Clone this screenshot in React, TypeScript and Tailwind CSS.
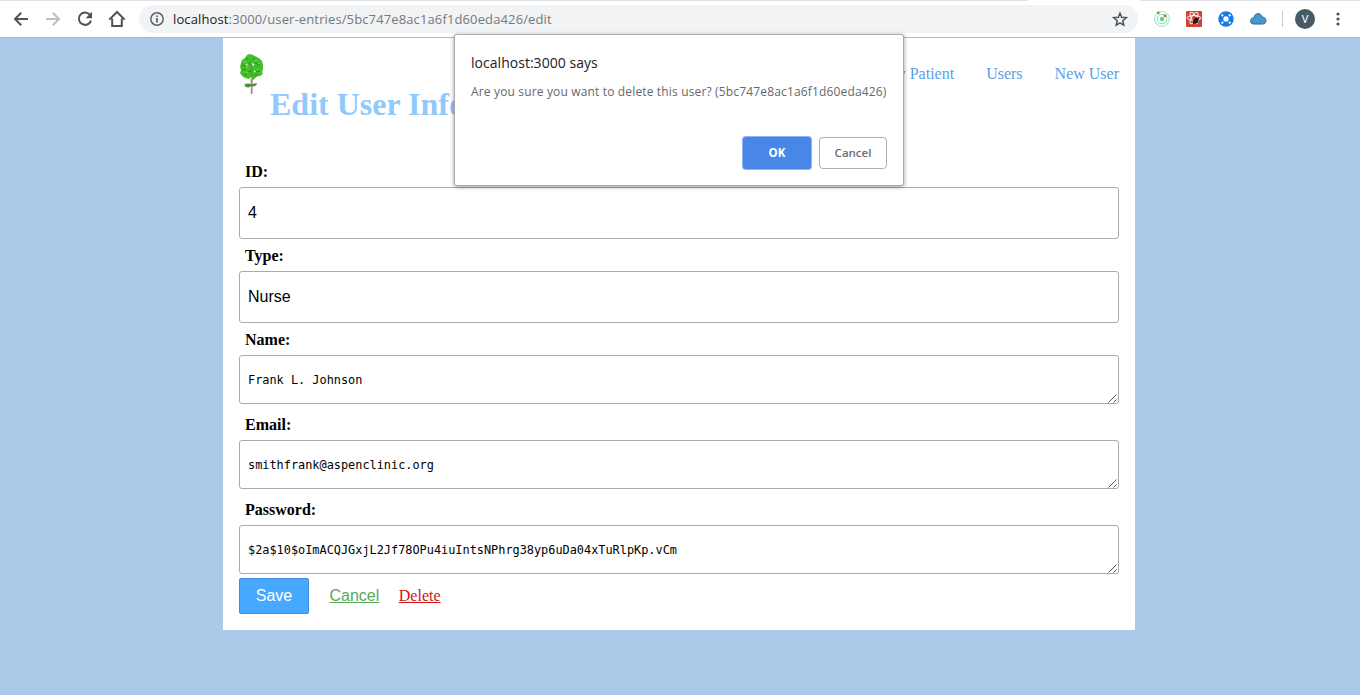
import type { ReactNode } from 'react';

const serif = "font-['Liberation_Serif','Times_New_Roman',serif]";
const sans = "font-['Liberation_Sans',Arial,sans-serif]";
const ui = "font-['Open_Sans','Segoe_UI',sans-serif]";

function BrowserBar() {
  return (
    <div className="flex h-[38px] w-full flex-col border-b border-[#b4b6b8] bg-white">
      <div className="flex h-px bg-[#dee1e6]">
        <div className="ml-[1028px] w-[112px] bg-white" />
      </div>
      <div className="flex h-9 items-center">
        <svg className="ml-3 shrink-0" width="18" height="18" viewBox="0 0 18 18" fill="none" stroke="#4f5357" strokeWidth="2">
          <path d="M16 9H3.2M9.2 2.8 3 9l6.2 6.2" />
        </svg>
        <svg className="ml-[14px] shrink-0" width="18" height="18" viewBox="0 0 18 18" fill="none" stroke="#bdbfc1" strokeWidth="2">
          <path d="M2 9h12.8M8.8 2.8 15 9l-6.2 6.2" />
        </svg>
        <svg className="ml-[14px] shrink-0" width="18" height="18" viewBox="0 0 18 18">
          <path d="M14.2 5.1A6.2 6.2 0 1 0 15 10.6" fill="none" stroke="#4f5357" strokeWidth="2" />
          <path d="M16 1.8v6.4H9.6z" fill="#4f5357" />
        </svg>
        <svg className="ml-[14px] shrink-0" width="18" height="18" viewBox="0 0 18 18" fill="none" stroke="#4f5357" strokeWidth="2">
          <path d="M1.3 9.6 9 2l7.7 7.6M4.2 8.4V16h9.6V8.4" />
        </svg>
        <div className="ml-[13px] flex h-[28px] w-[999px] shrink-0 items-center rounded-full bg-[#f1f3f4]">
          <svg className="ml-[11px] shrink-0" width="14" height="14" viewBox="0 0 14 14">
            <circle cx="7" cy="7" r="6.2" fill="none" stroke="#5f6368" strokeWidth="1.5" />
            <path d="M6.2 6h1.6v4.5H6.2zM6.2 3.4h1.6v1.5H6.2z" fill="#4f5357" />
          </svg>
          <span className={`ml-[9px] whitespace-nowrap text-[13px] leading-5 tracking-[0.125px] text-[#75797d] ${ui}`}>
            <span className="text-[#202124]">localhost</span>:3000/user-entries/5bc747e8ac1a6f1d60eda426/edit
          </span>
          <svg className="ml-auto mr-[10px] shrink-0" width="16" height="16" viewBox="0 0 16 16" fill="none" stroke="#4f5357" strokeWidth="1.5">
            <path d="m8 2.200 1.700 4.100 4.600.4-3.500 3 1 4.500L8 11.800l-3.800 2.400 1-4.500-3.500-3 4.600-.4z" />
          </svg>
        </div>
        <svg className="ml-[16px] shrink-0" width="16" height="16" viewBox="0 0 16 16" fill="none">
          <circle cx="8" cy="8" r="7.4" stroke="#8ee8b8" strokeWidth="1" />
          <circle cx="8" cy="8" r="4.8" stroke="#72e5a8" strokeWidth="1" />
          <circle cx="8" cy="8" r="2.2" fill="#45df90" />
          <circle cx="4.2" cy="1.8" r="1.4" fill="#d3692e" />
          <circle cx="11" cy="4.8" r="1.5" fill="#dc6130" />
        </svg>
        <svg className="ml-4 shrink-0" width="16" height="16" viewBox="0 0 16 16" fill="none">
          <rect width="16" height="16" rx="1" fill="#cf4338" />
          <g stroke="#fce9e6" strokeWidth="1.1">
            <ellipse cx="8" cy="7" rx="6.4" ry="2.5" />
            <ellipse cx="8" cy="7" rx="6.4" ry="2.5" transform="rotate(60 8 7)" />
            <ellipse cx="8" cy="7" rx="6.4" ry="2.5" transform="rotate(120 8 7)" />
          </g>
          <ellipse cx="9.800" cy="9.600" rx="2.300" ry="3.600" fill="#2c1512" transform="rotate(35 9.8 9.6)" />
          <path d="m6.500 9 6 3M7 13l5-6" stroke="#2c1512" />
        </svg>
        <svg className="ml-4 shrink-0" width="16" height="16" viewBox="0 0 16 16">
          <circle cx="8" cy="8" r="7.7" fill="#147bea" />
          <circle cx="8" cy="8" r="2.7" fill="#fff" />
          <path d="m3.600 3.600 1.400 1.400m7.400-1.400L11 5M3.600 12.400 5 11m7.400 1.400L11 11" stroke="#fff" strokeWidth="2" />
        </svg>
        <svg className="ml-[15px] shrink-0" width="18" height="16" viewBox="0 0 18 16">
          <path d="M4.2 13.1a3.2 3.2 0 0 1-.5-6.2c.6-.2 1-.2 1.4-.1C5.200 4 7 2.600 9.100 2.600c2 0 3.600 1.300 4 3.500 2.400 0 3.900 1.600 3.900 3.500 0 2.100-1.500 3.500-3.600 3.500z" fill="#4299d3" stroke="#405f75" strokeWidth=".9" />
        </svg>
        <div className="ml-[15px] h-4 w-px shrink-0 bg-[#c6c9cc]" />
        <div className="ml-3 flex size-5 shrink-0 items-center justify-center rounded-full bg-[#455a64] font-[Roboto,sans-serif] text-[11px] leading-none text-white">V</div>
        <svg className="ml-[21px] shrink-0" width="4" height="16" viewBox="0 0 4 16" fill="#4f5357">
          <circle cx="2" cy="3" r="1.6" />
          <circle cx="2" cy="8" r="1.6" />
          <circle cx="2" cy="13" r="1.6" />
        </svg>
      </div>
    </div>
  );
}

function TreeLogo() {
  return (
    <svg className="mt-4 shrink-0" width="26" height="42" viewBox="0 0 26 42">
      <path d="M11.300 22h2.800l-.6 8v10h-1.700V30z" fill="#a08a72" />
      <path d="m7 19 6 7m6-6-5 6" stroke="#a08a72" strokeWidth="1" />
      <path d="m11 0 3 1 4 2 3 2 2 2 1 4v4l-1 3 1 2-3 2-4 1-2 2-3-1-2 1-4-1-3-2-2-3 1-3-1-3 1-4 1-3 3-2 2-3z" fill="#43bf2b" />
      <path d="m6 6 3-2m4 2 3-2M3 11l3 1m3-3 4 2m3-2 5 2M3 16l4-1m2 3 3-1m4 1 5-1M5 20l3 1m7 1 4-2" fill="none" stroke="#248a1b" strokeWidth=".9" />
      <path d="m5 8 2-1m9 0 2-1M7 14l2-1m9 3 2-1m-1-6 2 1M6 18l2 1" stroke="#66de47" strokeWidth="1.100" />
      <path d="m12.500 8-.3 14" fill="none" stroke="#76763e" strokeWidth=".8" />
      <path d="M7 10.500h1.500M13 9.500l2 2M15 17.500h1.500M10.500 24.500h2" stroke="#f4eee5" strokeWidth="1.600" />
      <path d="m5.500 30 4-.6 3 .8 4-1 2 .3-3 3-3-.5-3 1.500-3-.5z" fill="#4a9138" />
    </svg>
  );
}

function Label({ children }: { children: ReactNode }) {
  return <label className="flex h-8 items-center pl-[6px] pt-px text-[16px] font-bold leading-[18px] text-black">{children}</label>;
}

function InputField({ label, value }: { label: string; value: string }) {
  return (
    <div className="flex flex-col">
      <Label>{label}</Label>
      <div className={`flex h-[52px] items-center rounded-[3px] border border-[#aaa] px-2 text-[16px] text-black ${sans}`}>{value}</div>
    </div>
  );
}

function AreaField({ label, value }: { label: string; value: string }) {
  return (
    <div className="mb-1 flex flex-col">
      <Label>{label}</Label>
      <div className="flex h-[49px] items-center rounded-[3px] border border-[#aaa] pl-2 font-['DejaVu_Sans_Mono',Consolas,monospace] text-[11.88px] text-black">
        <span className="pt-[2px]">{value}</span>
        <svg className="ml-auto mr-px shrink-0 self-end" width="9" height="9" viewBox="0 0 9 9" stroke="#555" strokeWidth="1">
          <path d="M.5 8.500l8-8M5.500 8.500l3-3" />
        </svg>
      </div>
    </div>
  );
}

function ConfirmDialog() {
  return (
    <div className={`absolute left-[454px] top-[34px] flex h-[152px] w-[450px] flex-col rounded-[3px] border border-[#a9a9a9] bg-white px-4 pt-[18px] shadow-[0_1px_4px_rgba(0,0,0,0.4)] ${ui}`}>
      <div className="whitespace-nowrap text-[14px] leading-5 tracking-[0.03px] text-[#202124]">localhost:3000 says</div>
      <div className="mt-[9px] whitespace-nowrap text-[12px] leading-5 tracking-[0.155px] text-[#65696d]">
        Are you sure you want to delete this user? (5bc747e8ac1a6f1d60eda426)
      </div>
      <div className="mt-[35px] flex justify-end gap-2">
        <button className="h-8 w-[68px] rounded-[3px] bg-[#4886e8] text-[11.5px] font-bold text-white shadow-[0_0_0_1px_#8ab4f2]">OK</button>
        <button className="h-8 w-[68px] rounded-[4px] border border-[#adafb2] bg-white text-[11.5px] font-semibold text-[#6a6d71]">Cancel</button>
      </div>
    </div>
  );
}

export default function App() {
  return (
    <div className={`relative h-[695px] w-[1360px] overflow-hidden bg-[#a9cbe9] ${serif}`}>
      <BrowserBar />
      <main className="ml-[223px] h-[592px] w-[912px] bg-white px-4">
        <header className="flex h-[117px] items-start">
          <TreeLogo />
          <h1 className="ml-[5px] mt-[48px] whitespace-nowrap text-[32px] font-bold leading-[37px] text-[#91c9fc]">Edit User Info</h1>
          <nav className="ml-auto mt-[27px] flex gap-8 whitespace-nowrap text-[16px] leading-[18px] text-[#5ba0e6]">
            <a>New Patient</a>
            <a>Users</a>
            <a>New User</a>
          </nav>
        </header>
        <InputField label="ID:" value="4" />
        <InputField label="Type:" value="Nurse" />
        <AreaField label="Name:" value="Frank L. Johnson" />
        <AreaField label="Email:" value="smithfrank@aspenclinic.org" />
        <AreaField label="Password:" value="$2a$10$oImACQJGxjL2Jf78OPu4iuIntsNPhrg38yp6uDa04xTuRlpKp.vCm" />
        <div className="flex h-9 items-center">
          <button className={`h-9 w-[70px] rounded-[2px] border border-[#3b8fdc] bg-[#46a8ff] text-[16px] text-white ${sans}`}>Save</button>
          <a className={`ml-[20.5px] text-[16px] text-[#57a957] underline ${sans}`}>Cancel</a>
          <a className="ml-[19.5px] text-[16px] text-[#cc1414] underline">Delete</a>
        </div>
      </main>
      <ConfirmDialog />
    </div>
  );
}
